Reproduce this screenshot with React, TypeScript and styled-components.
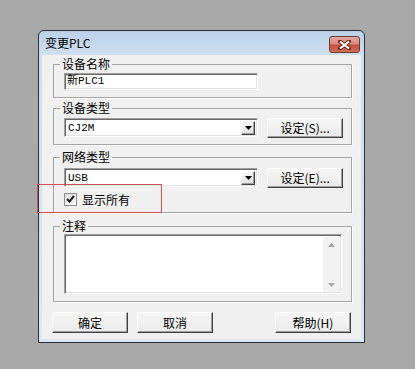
import React from 'react'
import styled, { createGlobalStyle } from 'styled-components'

const GlobalStyle = createGlobalStyle`
  html, body {
    margin: 0;
    padding: 0;
    background: #a9a9a9;
  }
  body {
    font-family: "Noto Sans CJK SC", "Liberation Sans", sans-serif;
    font-size: 12px;
    color: #000;
  }
`

const Page = styled.div`
  position: relative;
  width: 415px;
  height: 369px;
  padding: 30px 0 0 38px;
  box-sizing: border-box;
  overflow: hidden;
`

const Window = styled.div`
  width: 327px;
  height: 313px;
  box-sizing: border-box;
  border: 1px solid #2b2f33;
  border-radius: 6px 6px 0 0;
  background: linear-gradient(to bottom, #bad1e9 0px, #cfdff0 24px, #dbe7f4 100%);
  padding: 0 3px 3px 3px;
  display: flex;
  flex-direction: column;
`

const TitleBar = styled.div`
  height: 24px;
  display: flex;
  align-items: center;
  padding-left: 3px;
`

const Title = styled.span`
  font-size: 12px;
  line-height: 14px;
  color: #000;
`

const CloseButton = styled.div`
  width: 31px;
  height: 17px;
  box-sizing: border-box;
  margin: 0 1px 0 auto;
  align-self: flex-start;
  margin-top: 5px;
  border: 1px solid #6d3a33;
  border-radius: 3px;
  background: linear-gradient(to bottom, #e4a99e 0%, #d98a7c 45%, #c5503f 55%, #cf6f58 100%);
  display: flex;
  align-items: center;
  justify-content: center;
`

const Client = styled.div`
  flex: 1;
  background: #f0f0f0;
  padding: 2px 9px 6px 11px;
  display: flex;
  flex-direction: column;
`

const Group = styled.fieldset<{ $mt: number; $pt: number; $pb: number }>`
  margin: ${p => p.$mt}px 0 0 0;
  padding: ${p => p.$pt}px 8px ${p => p.$pb}px 10px;
  border: 1px solid #a6a6a6;
  min-width: 0;
  box-shadow: 1px 1px 0 #fff;
`

const Legend = styled.legend`
  padding: 0 2px;
  margin-left: -4px;
  font-size: 12px;
  line-height: 14px;
`

const Sunken = styled.div`
  box-sizing: border-box;
  border: 1px solid;
  border-color: #a0a0a0 #ffffff #ffffff #a0a0a0;
  box-shadow: inset 1px 1px 0 #696969, inset -1px -1px 0 #e3e3e3;
  background: #fff;
`

const TextInput = styled(Sunken)`
  width: 194px;
  height: 17px;
  display: flex;
  align-items: center;
  padding-left: 2px;
  font-family: "Liberation Mono", "Noto Sans CJK SC", monospace;
  font-size: 11px;
  line-height: 13px;
`

const Row = styled.div`
  display: flex;
  align-items: flex-start;
  gap: 9px;
`

const Select = styled(Sunken)`
  width: 195px;
  height: 19px;
  display: flex;
  align-items: stretch;
  padding: 2px 2px 1px 2px;
`

const SelectValue = styled.span`
  flex: 1;
  display: flex;
  align-items: center;
  padding-left: 1px;
  font-family: "Liberation Mono", "Noto Sans CJK SC", monospace;
  font-size: 11px;
`

const ArrowBox = styled.span`
  width: 14px;
  box-sizing: border-box;
  border: 1px solid;
  border-color: #ffffff #404040 #404040 #ffffff;
  box-shadow: inset -1px -1px 0 #a0a0a0;
  background: linear-gradient(to bottom, #f7f7f7, #e2e2e2);
  display: flex;
  align-items: center;
  justify-content: center;
`

const Button = styled.div<{ $h?: number }>`
  width: 76px;
  height: ${p => p.$h ?? 20}px;
  box-sizing: border-box;
  border: 1px solid;
  border-color: #ffffff #404040 #404040 #ffffff;
  box-shadow: inset -1px -1px 0 #a0a0a0;
  background: linear-gradient(to bottom, #f5f5f5, #ebebeb);
  display: flex;
  align-items: center;
  justify-content: center;
  font-size: 12px;
  line-height: 14px;
`

const CheckRow = styled.div`
  display: flex;
  align-items: center;
  gap: 5px;
  height: 14px;
  margin-top: 4px;
`

const CheckBox = styled.span`
  width: 13px;
  height: 13px;
  box-sizing: border-box;
  border: 1px solid #8e8f8f;
  background: linear-gradient(135deg, #dcdcdc, #fbfbfb);
  display: flex;
  align-items: center;
  justify-content: center;
`

const NoteBox = styled(Sunken)`
  width: 278px;
  height: 60px;
  display: flex;
`

const NoteText = styled.div`
  flex: 1;
`

const ScrollBar = styled.div`
  width: 17px;
  margin: 2px 1px 1px 0;
  background: #f2f2f2;
  display: flex;
  flex-direction: column;
  justify-content: space-between;
  align-items: center;
  padding: 6px 0 5px;
  box-sizing: border-box;
`

const ButtonRow = styled.div`
  display: flex;
  gap: 9px;
  margin: 10px 1px 0 -1px;
`

const HelpButton = styled(Button)`
  margin-left: auto;
`

const Annotation = styled.div`
  position: absolute;
  left: 37px;
  top: 184px;
  width: 125px;
  height: 29px;
  box-sizing: border-box;
  border: 1px solid #d44e55;
`

const DropArrow = () => (
  <svg width="7" height="4" viewBox="0 0 7 4">
    <polygon points="0,0 7,0 3.5,4" fill="#000" />
  </svg>
)

const ScrollArrow = ({ up }: { up?: boolean }) => (
  <svg width="7" height="4" viewBox="0 0 7 4">
    <polygon points={up ? '0,4 7,4 3.5,0' : '0,0 7,0 3.5,4'} fill="#a3a3a3" />
  </svg>
)

const App = (): JSX.Element => {
  return (
    <Page>
      <GlobalStyle />
      <Window>
        <TitleBar>
          <Title>变更PLC</Title>
          <CloseButton>
            <svg width="13" height="10" viewBox="0 0 13 10">
              <path d="M2 1.5 L11 8.5 M11 1.5 L2 8.5" stroke="#6a2a22" strokeWidth="4" strokeLinecap="square" />
              <path d="M2 1.5 L11 8.5 M11 1.5 L2 8.5" stroke="#fff" strokeWidth="2.2" />
            </svg>
          </CloseButton>
        </TitleBar>
        <Client>
          <Group $mt={0} $pt={2} $pb={7}>
            <Legend>设备名称</Legend>
            <TextInput>新PLC1</TextInput>
          </Group>
          <Group $mt={3} $pt={3} $pb={6}>
            <Legend>设备类型</Legend>
            <Row>
              <Select>
                <SelectValue>CJ2M</SelectValue>
                <ArrowBox><DropArrow /></ArrowBox>
              </Select>
              <Button>设定(S)...</Button>
            </Row>
          </Group>
          <Group $mt={5} $pt={4} $pb={6}>
            <Legend>网络类型</Legend>
            <Row>
              <Select>
                <SelectValue>USB</SelectValue>
                <ArrowBox><DropArrow /></ArrowBox>
              </Select>
              <Button>设定(E)...</Button>
            </Row>
            <CheckRow>
              <CheckBox>
                <svg width="9" height="8" viewBox="0 0 9 8">
                  <path d="M1 4 L3.5 6.5 L8 1" stroke="#1b1b1b" strokeWidth="2" fill="none" />
                </svg>
              </CheckBox>
              <span>显示所有</span>
            </CheckRow>
          </Group>
          <Group $mt={6} $pt={1} $pb={7}>
            <Legend>注释</Legend>
            <NoteBox>
              <NoteText />
              <ScrollBar>
                <ScrollArrow up />
                <ScrollArrow />
              </ScrollBar>
            </NoteBox>
          </Group>
          <ButtonRow>
            <Button $h={21}>确定</Button>
            <Button $h={21}>取消</Button>
            <HelpButton $h={21}>帮助(H)</HelpButton>
          </ButtonRow>
        </Client>
      </Window>
      <Annotation />
    </Page>
  )
}

export default App
